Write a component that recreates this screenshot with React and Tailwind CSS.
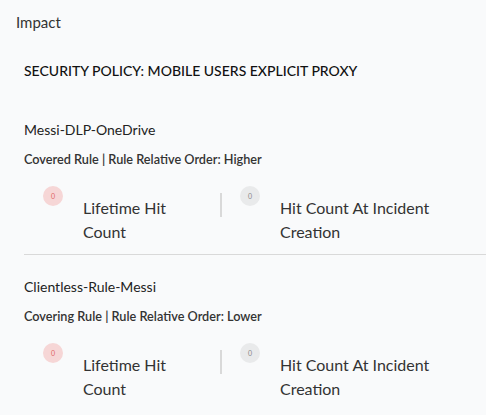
import React from 'react'

const rules = [
  { name: 'Messi-DLP-OneDrive', meta: 'Covered Rule | Rule Relative Order: Higher', border: true },
  { name: 'Clientless-Rule-Messi', meta: 'Covering Rule | Rule Relative Order: Lower', border: false },
]

function Stat({ tone, label, width }) {
  const badge =
    tone === 'red'
      ? 'bg-[#f6d6d6] text-[#e06666]'
      : 'bg-[#e9eaeb] text-[#888]'
  return (
    <div className="flex items-start">
      <div className={`w-5 h-5 rounded-full flex items-center justify-center text-[7px] shrink-0 ${badge}`}>0</div>
      <div className={`ml-5 mt-[10px] text-[16px] leading-[24px] text-[#333] ${width}`}>{label}</div>
    </div>
  )
}

export default function App() {
  return (
    <div className="w-[486px] h-[415px] bg-[#f9fafb] overflow-hidden" style={{ fontFamily: 'Lato, "Open Sans", sans-serif' }}>
      <div className="pl-4 pt-[12px] text-[15px] leading-[20px] text-[#333]">Impact</div>
      <div className="pl-6 mt-[29px] text-[14px] leading-[20px] font-medium text-[#111]">SECURITY POLICY: MOBILE USERS EXPLICIT PROXY</div>
      <div className="pl-6 mt-[39px]">
        {rules.map((r) => (
          <div key={r.name} className={r.border ? 'border-b border-[#d9d9d9] pb-[10px] mb-[22px]' : ''}>
            <div className="text-[14px] leading-[20px] text-[#222]">{r.name}</div>
            <div className="mt-[11px] text-[12.7px] leading-[16px] font-semibold text-[#333]">{r.meta}</div>
            <div className="mt-[19px] pl-[19px] flex items-start">
              <Stat tone="red" label="Lifetime Hit Count" width="w-[100px]" />
              <div className="w-[2px] h-6 bg-[#d9d9d9] mt-[7px] ml-[37px] mr-[18px]" />
              <Stat tone="gray" label="Hit Count At Incident Creation" width="w-[170px]" />
            </div>
          </div>
        ))}
      </div>
    </div>
  )
}
